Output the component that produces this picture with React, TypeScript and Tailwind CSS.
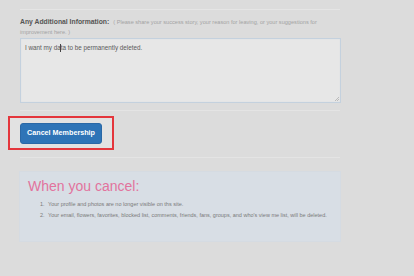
import React from "react";

export default function App() {
  return (
    <div
      className="w-[414px] h-[276px] overflow-hidden bg-[#dcdcdc]"
      style={{ fontFamily: '"Liberation Sans", Arial, sans-serif' }}
    >
      <div className="pl-[20px] pt-[9px] w-[341px]">
        <div className="h-px w-[320px] bg-[#e5e5e5]" />
        <div className="mt-[7px] leading-[10px] text-[#a3a3a3] text-[5.6px]">
          <span className="font-bold text-[6.8px] text-[#555]">Any Additional Information:</span>
          <span className="ml-[4px]">( Please share your success story, your reason for leaving, or your suggestions for</span>
          <br />
          <span>improvement here. )</span>
        </div>
        <div className="relative mt-[1px] h-[65px] w-[321px] border border-[#c4d1de] bg-[#e7e7e7] shadow-[inset_0_0_1px_#c9d6e2] pl-[4px] pt-[4px] text-[6.3px] leading-[10px] text-[#5a5a5a]">
          <span>I want my da</span>
          <span className="inline-block w-px h-[8px] bg-[#444] align-middle -mx-[0.5px]" />
          <span>ta to be permanently deleted.</span>
          <svg className="absolute right-[1px] bottom-[1px]" width="5" height="5" viewBox="0 0 5 5">
            <path d="M5 1 L1 5 M5 3 L3 5" stroke="#b0b0b0" strokeWidth="0.8" />
          </svg>
        </div>
        <div className="mt-[7px] h-px w-[320px] bg-[#e4e4e4]" />
        <div className="mt-[5px] -ml-[12px] w-[106px] h-[34px] border-2 border-[#e4363c] bg-[#e2e2e2] pl-[10px] pt-[5px]">
          <div className="w-[82px] h-[21px] rounded-[3px] bg-[#2e74b7] border border-[#2a68a6] flex items-center justify-center text-white font-bold text-[7.2px]">
            Cancel Membership
          </div>
        </div>
        <div className="mt-[7px] h-px w-[320px] bg-[#e4e4e4]" />
        <div className="mt-[13px] -ml-px w-[322px] h-[71px] bg-[#d8dee5] border border-[#d5dbe2] pl-[8px] pt-[6px]">
          <div className="text-[14px] leading-[16px] text-[#e2739d]">When you cancel:</div>
          <ol className="mt-[5px] text-[5.5px] leading-[11px] text-[#7a7a7a]">
            <li className="flex">
              <span className="ml-[12px] w-[8px]">1.</span>
              <span>Your profile and photos are no longer visible on ths site.</span>
            </li>
            <li className="flex">
              <span className="ml-[12px] w-[8px]">2.</span>
              <span>Your email, flowers, favorites, blocked list, comments, friends, fans, groups, and who's view me list, will be deleted.</span>
            </li>
          </ol>
        </div>
      </div>
    </div>
  );
}
